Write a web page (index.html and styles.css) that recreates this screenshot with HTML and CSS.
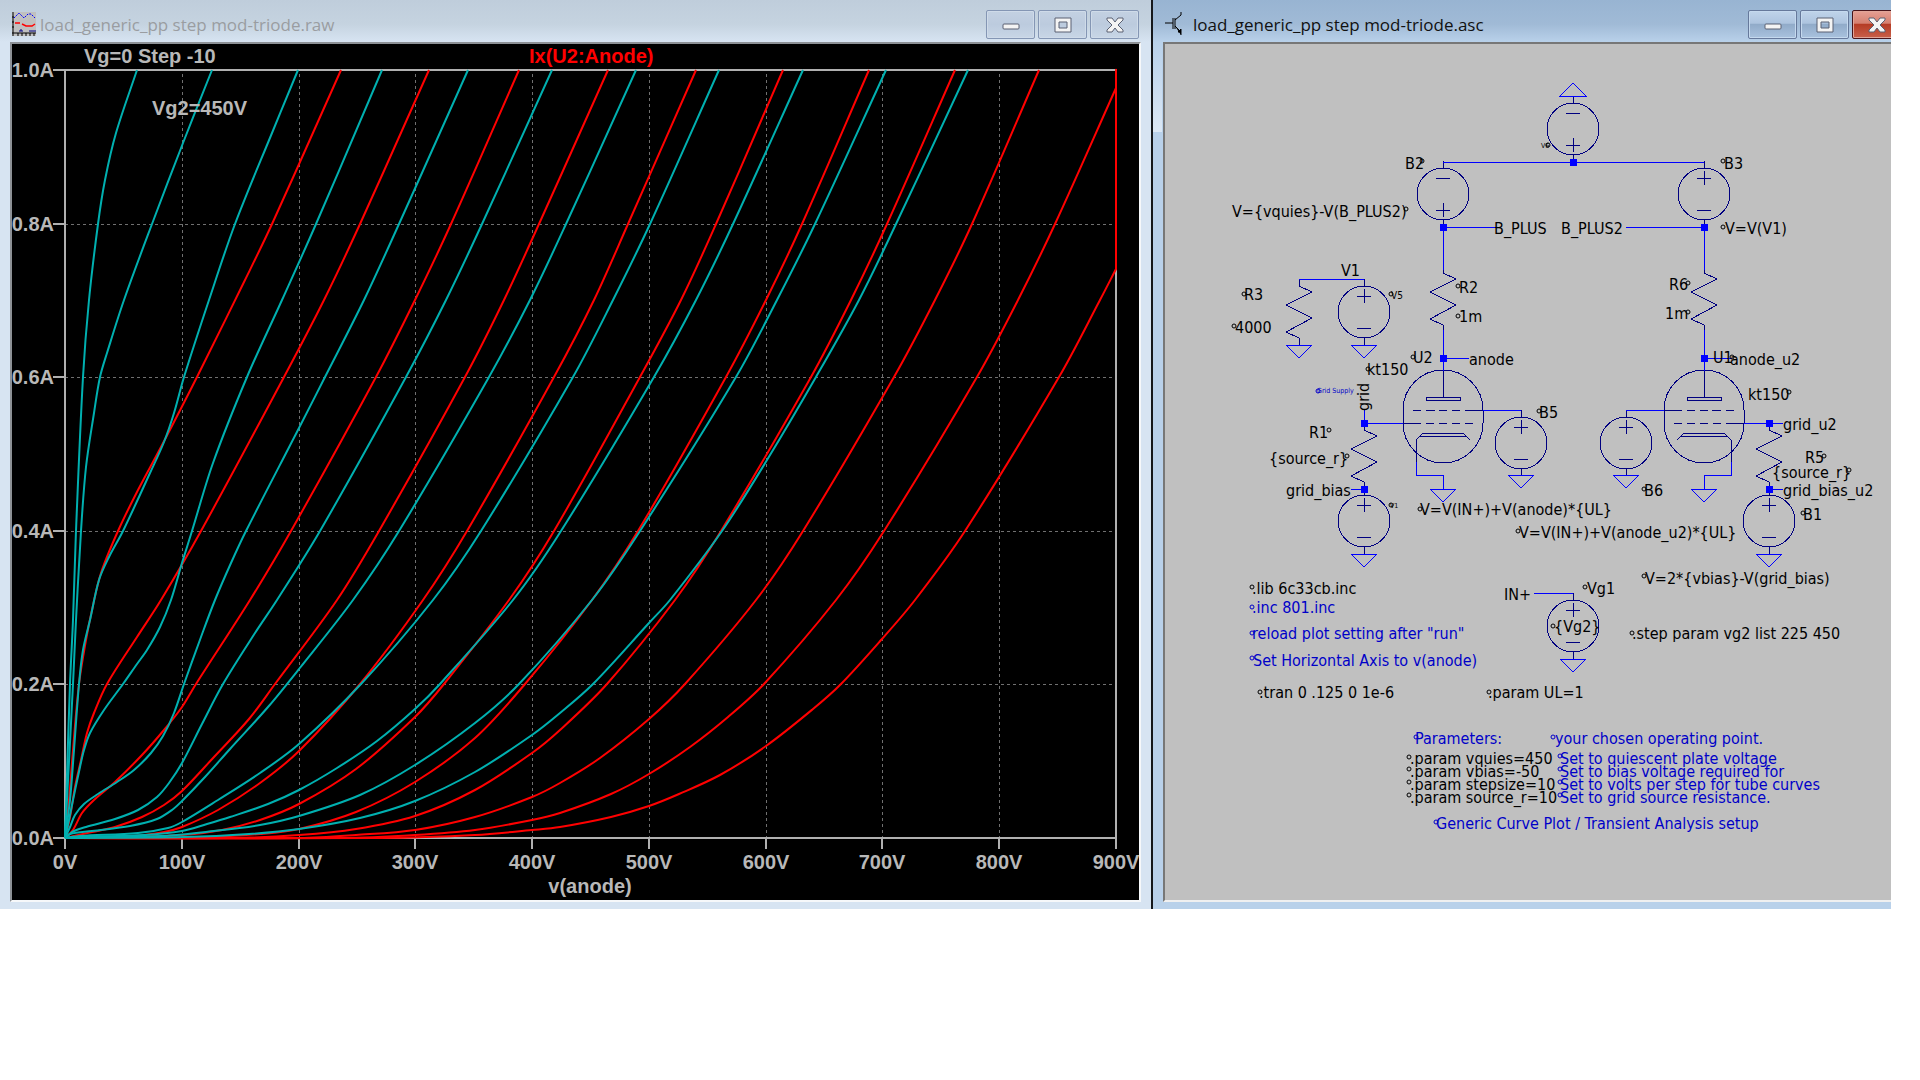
FILE: index.html
```html
<!DOCTYPE html>
<html lang="en">
<head>
<meta charset="utf-8">
<title>load_generic_pp step mod-triode</title>
<link rel="stylesheet" href="styles.css">
</head>
<body>
<main class="workspace">

<section class="window plot-window" aria-label="Waveform window">
  <header class="titlebar">
    <svg class="app-icon" viewBox="0 0 24 24" aria-hidden="true">
      <rect width="24" height="24" fill="#c0c0c0"/>
      <path d="M1 0V24M0 21H24M0 5H2M0 10H2M0 15H2M6 21V24M10 21V24M14 21V24M18 21V24M22 21V24" stroke="#000" fill="none"/>
      <path d="M2 6L7 1L12 6L16 2H19L23 6" stroke="#00f" stroke-dasharray="2 1" fill="none"/>
      <path d="M3 11H8M10 12L14 14H20L23 12" stroke="#f00" stroke-width="1.5" fill="none"/>
      <path d="M8 20V18H10V20M17 19H24" stroke="#000080" fill="none"/>
    </svg>
    <h1 class="title">load_generic_pp step mod-triode.raw</h1>
    <div class="controls">
      <button class="ctl" type="button" aria-label="Minimize"><svg viewBox="0 0 24 20"><rect x="4" y="9" width="16" height="5" rx="1"/></svg></button>
      <button class="ctl" type="button" aria-label="Maximize"><svg viewBox="0 0 24 20"><path fill-rule="evenodd" d="M4 3H20V17H4ZM8 7V13H16V7Z"/></svg></button>
      <button class="ctl" type="button" aria-label="Close"><svg viewBox="0 0 24 20"><path d="M4 3H9L12 7L15 3H20V5L15 10L20 15V17H15L12 13L9 17H4V15L9 10L4 5Z"/></svg></button>
    </div>
  </header>
  <div class="client plot-client">
    <svg class="canvas" viewBox="12 44 1127 856" role="img" aria-label="Plate curves">
      <g class="grid">
        <path d="M65 224H1116M65 377H1116M65 531H1116M65 684H1116"/>
        <path d="M182 74V838M299 74V838M415 74V838M532 74V838M649 74V838M766 74V838M882 74V838M999 74V838"/>
      </g>
      <path class="axis" d="M53 70H1116V849M53 224H65M53 377H65M53 531H65M53 684H65M53 838H1116M65 70V849M182 838V849M299 838V849M415 838V849M532 838V849M649 838V849M766 838V849M882 838V849M999 838V849"/>
      <g id="curves" class="curves"></g>
      <g class="label">
        <text x="84" y="63">Vg=0 Step -10</text>
        <text x="152" y="115">Vg2=450V</text>
        <text class="trace" x="529" y="63">Ix(U2:Anode)</text>
        <g class="end">
          <text x="54" y="77">1.0A</text><text x="54" y="231">0.8A</text><text x="54" y="384">0.6A</text><text x="54" y="538">0.4A</text><text x="54" y="691">0.2A</text><text x="54" y="845">0.0A</text>
        </g>
        <g class="mid">
          <text x="65" y="869">0V</text><text x="182" y="869">100V</text><text x="299" y="869">200V</text><text x="415" y="869">300V</text><text x="532" y="869">400V</text><text x="649" y="869">500V</text><text x="766" y="869">600V</text><text x="882" y="869">700V</text><text x="999" y="869">800V</text><text x="1116" y="869">900V</text>
          <text x="590" y="893">v(anode)</text>
        </g>
      </g>
    </svg>
  </div>
</section>

<section class="window schematic-window" aria-label="Schematic window">
  <header class="titlebar">
    <svg class="app-icon" viewBox="0 0 24 24" aria-hidden="true">
      <path d="M0 11H8M8 6V17M10 6V17M10 8L16 3V0" stroke="#000" fill="none"/>
      <path d="M10 14L16 20V23M16 20H13L16 17Z" stroke="#000" fill="#000"/>
    </svg>
    <h1 class="title">load_generic_pp step mod-triode.asc</h1>
    <div class="controls">
      <button class="ctl" type="button" aria-label="Minimize"><svg viewBox="0 0 24 20"><rect x="4" y="9" width="16" height="5" rx="1"/></svg></button>
      <button class="ctl" type="button" aria-label="Maximize"><svg viewBox="0 0 24 20"><path fill-rule="evenodd" d="M4 3H20V17H4ZM8 7V13H16V7Z"/></svg></button>
      <button class="ctl close" type="button" aria-label="Close"><svg viewBox="0 0 24 20"><path d="M4 3H9L12 7L15 3H20V5L15 10L20 15V17H15L12 13L9 17H4V15L9 10L4 5Z"/></svg></button>
    </div>
  </header>
  <div class="client schematic-client">
    <svg class="canvas" viewBox="1165 44 726 856" role="img" aria-label="Curve tracer schematic">
      <defs>
        <g id="source"><circle r="26"/><path d="M0-33V-26M0 26V33M-7-16H7M0-23V-9M-7 16H7"/></g>
        <path id="ground" d="M-13 0H13L0 13Z"/>
        <path id="resistor" d="M0 0V7L13 13L-13 26L13 39L-13 53L0 59V66"/>
        <g id="tube">
          <path d="M-40 52A40 40 0 0 1 40 52V65A40 40 0 0 1-40 65Z"/>
          <path d="M0 13V39M-17 39H17V42H-17ZM-30 52H-22M-17 52H-8M-4 52H4M9 52H17M22 52H40M-40 65H-22M-17 65H-9M-4 65H4M9 65H17M22 65H30"/>
          <path d="M27 82L20 75H-20L-27 82V104M-23 78H23"/>
        </g>
      </defs>
      <g class="symbols">
        <use href="#source" transform="translate(1573 129) rotate(180)"/>
        <use href="#source" transform="translate(1443 194) rotate(180)"/>
        <use href="#source" x="1704" y="194"/>
        <use href="#source" x="1364" y="312"/>
        <use href="#source" x="1521" y="443"/>
        <use href="#source" x="1626" y="443"/>
        <use href="#source" x="1364" y="521"/>
        <use href="#source" x="1769" y="521"/>
        <use href="#source" x="1573" y="626"/>
        <use href="#resistor" x="1299" y="279"/>
        <use href="#resistor" x="1443" y="266"/>
        <use href="#resistor" x="1704" y="266"/>
        <use href="#resistor" x="1364" y="423"/>
        <use href="#resistor" x="1769" y="423"/>
        <use href="#tube" x="1443" y="358"/>
        <use href="#tube" transform="translate(1704 358) scale(-1 1)"/>
      </g>
      <g class="wires">
        <use href="#ground" transform="translate(1573 96) rotate(180)"/>
        <use href="#ground" x="1299" y="345"/><use href="#ground" x="1364" y="345"/>
        <use href="#ground" x="1521" y="475"/><use href="#ground" x="1626" y="475"/>
        <use href="#ground" x="1443" y="489"/><use href="#ground" x="1704" y="489"/>
        <use href="#ground" x="1364" y="554"/><use href="#ground" x="1769" y="554"/>
        <use href="#ground" x="1573" y="659"/>
        <path d="M1443 162H1704M1443 227H1496M1626 227H1704M1443 227V270M1704 227V270M1299 279H1364M1443 330V371M1704 330V371M1443 358H1469M1704 358H1732M1364 410V423H1403M1351 489H1364M1483 410H1521M1626 410H1664M1744 423H1783M1769 489H1783M1534 593H1573M1416 462V475H1443V489M1731 462V475H1704V489"/>
        <path class="nodes" d="M1570 159h7v7h-7zM1440 224h7v7h-7zM1701 224h7v7h-7zM1440 355h7v7h-7zM1701 355h7v7h-7zM1361 420h7v7h-7zM1766 420h7v7h-7zM1361 486h7v7h-7zM1766 486h7v7h-7z"/>
      </g>
      <g class="anchors">
        <path class="a" d="M1422 161h0M1723 161h0M1406 209h0M1723 227h0M1548 145h0M1244 294h0M1391 294h0M1234 326h0M1458 286h0M1458 316h0M1413 357h0M1368 369h0M1329 430h0M1347 456h0M1391 505h0M1539 411h0M1420 509h0M1518 531h0M1644 576h0M1688 283h0M1688 312h0M1732 357h0M1789 392h0M1824 456h0M1849 470h0M1803 513h0M1644 489h0M1252 587h0M1260 692h0M1489 692h0M1585 587h0M1553 626h0M1632 633h0M1409 757h0M1409 769h0M1409 782h0M1409 795h0"/>
        <path class="a note" d="M1318 391h0M1252 607h0M1252 633h0M1252 658h0M1416 737h0M1553 737h0M1560 756h0M1560 769h0M1560 782h0M1560 795h0M1436 822h0"/>
      </g>
      <g class="text">
        <text x="1405" y="169">B2</text><text x="1724" y="169">B3</text>
        <text x="1232" y="217">V={vquies}-V(B_PLUS2)</text>
        <text x="1494" y="234">B_PLUS</text><text x="1561" y="234">B_PLUS2</text><text x="1725" y="234">V=V(V1)</text>
        <text class="tiny" x="1541" y="148">V6</text>
        <text x="1341" y="276">V1</text><text x="1244" y="300">R3</text><text class="small" x="1391" y="299">V5</text><text x="1235" y="333">4000</text>
        <text x="1459" y="293">R2</text><text x="1459" y="322">1m</text>
        <text x="1413" y="363">U2</text><text x="1469" y="365">anode</text><text x="1367" y="375">kt150</text>
        <text class="tiny note" x="1317" y="393">Grid Supply</text>
        <text transform="translate(1369 411) rotate(-90)">grid</text>
        <text x="1309" y="438">R1</text><text x="1269" y="464">{source_r}</text><text x="1286" y="496">grid_bias</text><text class="tiny" x="1390" y="508">V1</text>
        <text x="1539" y="418">B5</text>
        <text x="1420" y="515">V=V(IN+)+V(anode)*{UL}</text><text x="1519" y="538">V=V(IN+)+V(anode_u2)*{UL}</text><text x="1645" y="584">V=2*{vbias}-V(grid_bias)</text>
        <text x="1669" y="290">R6</text><text x="1665" y="319">1m</text><text x="1713" y="363">U1</text><text x="1730" y="365">anode_u2</text><text x="1748" y="400">kt150</text>
        <text x="1783" y="430">grid_u2</text><text x="1805" y="463">R5</text><text x="1772" y="478">{source_r}</text><text x="1783" y="496">grid_bias_u2</text>
        <text x="1803" y="520">B1</text><text x="1644" y="496">B6</text>
        <text x="1252" y="594">.lib 6c33cb.inc</text>
        <text class="note" x="1252" y="613">.inc 801.inc</text>
        <text class="note" x="1252" y="639">reload plot setting after "run"</text>
        <text class="note" x="1253" y="666">Set Horizontal Axis to v(anode)</text>
        <text x="1259" y="698">.tran 0 .125 0 1e-6</text><text x="1488" y="698">.param UL=1</text>
        <text x="1504" y="600">IN+</text><text x="1587" y="594">Vg1</text><text x="1554" y="632">{Vg2}</text>
        <text x="1632" y="639">.step param vg2 list 225 450</text>
        <text class="note" x="1415" y="744">Parameters:</text><text class="note" x="1555" y="744">your chosen operating point.</text>
        <text x="1410" y="764">.param vquies=450</text><text x="1410" y="777">.param vbias=-50</text><text x="1410" y="790">.param stepsize=10</text><text x="1410" y="803">.param source_r=10</text>
        <text class="note" x="1560" y="764">Set to quiescent plate voltage</text><text class="note" x="1560" y="777">Set to bias voltage required for</text><text class="note" x="1560" y="790">Set to volts per step for tube curves</text><text class="note" x="1560" y="803">Set to grid source resistance.</text>
        <text class="note" x="1436" y="829">Generic Curve Plot / Transient Analysis setup</text>
      </g>
    </svg>
  </div>
</section>

</main>
<script src="curves.js"></script>
</body>
</html>
```
FILE: styles.css
```css
* { box-sizing: border-box; }

body {
  margin: 0;
  background: #fff;
  font-family: "Open Sans", "Noto Sans", sans-serif;
}

.workspace {
  display: grid;
  grid-template-columns: minmax(0, 1153fr) minmax(0, 738fr);
  margin-right: 29px;
  overflow: hidden;
}

.window {
  display: flex;
  flex-direction: column;
  min-width: 0;
}

.plot-window {
  padding: 0 10px 7px 10px;
  border-right: 2px solid #15181c;
  background: linear-gradient(#bfcddb 0, #c5d3e0 24px, #d7e4f2 42px);
}

.schematic-window {
  padding: 0 0 7px 10px;
  background:
    linear-gradient(#b9d1ea, #dce8f5) 0 42px / 9px 90px no-repeat,
    linear-gradient(#98b4d2 0, #a0bad6 24px, #b9d1ea 42px);
}

.titlebar {
  display: flex;
  align-items: center;
  height: 42px;
}

.app-icon {
  flex: none;
  width: 24px;
  height: 24px;
  margin: 6px 4px 0 2px;
}

.title {
  flex: 1;
  margin: 8px 0 0 0;
  font-size: 17px;
  font-weight: 400;
  line-height: 24px;
  white-space: nowrap;
  color: #9a9da1;
}

.schematic-window .title { color: #111; }

.controls {
  display: flex;
  gap: 3px;
  padding: 7px 2px 0 0;
}

.schematic-window .controls { margin-right: -12px; }

.ctl {
  width: 49px;
  height: 29px;
  padding: 0;
  border: 1px solid #8496b4;
  border-radius: 2px;
  background: linear-gradient(#c3d1e2, #bccbde 50%, #c8d6e6);
  box-shadow: inset 0 0 0 1px #cfdbe9;
}

.ctl svg {
  display: block;
  width: 24px;
  height: 20px;
  margin: 0 auto;
  fill: #f4f4f4;
  stroke: #5a6072;
}

.schematic-window .ctl {
  border-color: #66799b;
  background: linear-gradient(#c0d4ea, #adc4df 45%, #91abc9 50%, #a9c2de);
  box-shadow: inset 0 0 0 1px #c5d9ee;
}

.schematic-window .close {
  border-color: #48141a;
  background: linear-gradient(#e5a094, #d58070 45%, #b53c25 50%, #c9604a);
  box-shadow: inset 0 0 0 1px #e0a598;
}

.client {
  border: 2px solid #8d9196;
  border-bottom-color: #f6f8fa;
}

.plot-client {
  border-right-color: #f6f8fa;
  background: #000;
}

.schematic-client {
  border-color: #777 transparent #f0f0f0 #777;
  border-right: 0;
  background: #c0c0c0;
}

.canvas {
  display: block;
  width: 100%;
  height: auto;
}

.grid path {
  fill: none;
  stroke: #707070;
  stroke-dasharray: 3 3;
  shape-rendering: crispEdges;
}

.axis {
  fill: none;
  stroke: #b0b0b0;
  stroke-width: 2;
  shape-rendering: crispEdges;
}

.curves {
  fill: none;
  stroke-width: 2;
}

.curves .red { stroke: #f00; }
.curves .cyan { stroke: #00b0b0; }

.label {
  font: 700 20px "Liberation Sans", sans-serif;
  fill: #b8b8b8;
}

.label .trace { fill: #f00; }
.label .end { text-anchor: end; }
.label .mid { text-anchor: middle; }

.symbols,
.wires {
  fill: none;
  stroke: #00f;
  shape-rendering: crispEdges;
}

.symbols { stroke: #000080; }

.wires .nodes {
  fill: #00f;
  stroke: none;
}

.anchors circle { fill: none; stroke: #000; }

.text {
  font: 400 16px "DejaVu Sans Condensed", "Open Sans", sans-serif;
  fill: #000;
}

.text .small { font-size: 10px; }
.text .tiny { font-size: 7px; }
.text .note { fill: #0000c8; }
.anchors .note { stroke: #0000c8; }
```
FILE: curves.js
```js
const SVG = "http://www.w3.org/2000/svg";

// Traces as canvas points, from the top of the plot down to the origin.
const traces = {
  red: [
    "341,70 272,224 245,280 197,377 161,447 138,490 118,531 101,573 92,610 86,640 79,684 73,750 69,800 65,838",
    "429,70 360,224 324,300 284,377 201,531 161,600 137,637 107,684 94,713 87,733 81,760 75,787 70,817 65,838",
    "519,70 451,224 415,300 376,377 291,531 250,600 196,684 182,707 164,730 142,755 115,782 94,800 82,813 73,830 65,838",
    "608,70 539,224 504,300 465,377 379,531 337,600 275,684 249,719 214,757 182,791 164,805 142,817 115,827 92,832 65,838",
    "696,70 628,224 594,300 554,377 467,531 423,600 360,684 299,751 260,783 218,810 182,827 164,832 134,836 65,838",
    "783,70 716,224 681,300 640,377 554,531 509,600 444,684 415,717 356,769 299,804 260,820 222,830 182,835 65,838",
    "869,70 802,224 766,300 726,377 638,531 592,600 525,684 475,738 415,782 356,812 299,829 260,834 207,837 65,838",
    "955,70 887,224 851,300 811,377 721,531 675,600 607,684 560,730 532,753 475,790 415,816 356,829 299,835 230,838 65,838",
    "1039,70 972,224 935,300 894,377 803,531 756,600 685,684 649,719 600,758 560,783 532,797 475,817 415,830 356,835 300,838 65,838",
    "1116,88 1055,224 1018,300 977,377 884,531 836,600 764,684 728,717 690,747 649,774 611,794 560,813 532,820 475,830 415,835 340,838 65,838",
    "1116,70 1116,70 1116,269 1116,269 1100,300 1059,377 965,531 915,600 882,639 841,684 813,709 766,746 720,775 679,794 649,806 611,817 560,827 532,830 475,835 380,838 65,838"
  ],
  cyan: [
    "137,70 116,133 105,180 98,224 89,300 83,377 76,531 73,620 70,684 65,838",
    "212,70 183,143 152,224 124,300 107,353 100,377 94,413 86,467 81,531 76,620 73,684 65,838",
    "298,70 272,133 235,224 209,300 184,377 174,413 164,442 150,473 123,531 109,557 99,580 90,620 83,650 79,684 74,750 70,800 65,838",
    "382,70 316,224 282,300 247,377 213,463 192,531 182,563 171,600 160,627 147,650 137,664 123,684 104,710 90,733 84,750 80,767 73,800 69,820 65,838",
    "468,70 399,224 364,300 325,377 299,428 246,531 231,563 215,600 201,637 184,684 174,713 163,736 151,753 134,770 117,782 98,794 84,804 75,815 70,827 65,838",
    "552,70 482,224 446,300 406,377 320,531 277,600 255,633 223,684 202,724 182,763 169,783 157,797 138,810 115,819 86,827 74,831 65,838",
    "636,70 566,224 530,300 489,377 399,531 353,600 299,669 268,707 230,749 205,777 182,801 172,810 157,819 130,826 92,831 70,834 65,838",
    "719,70 650,224 613,300 573,377 481,531 433,600 361,684 299,744 260,773 218,800 182,822 168,828 138,833 80,836 65,838",
    "803,70 733,224 696,300 654,377 561,531 513,600 440,684 415,709 377,741 337,768 299,790 268,804 230,817 207,824 182,831 145,835 80,837 65,838",
    "886,70 815,224 777,300 736,377 640,531 592,600 519,684 475,723 415,765 360,795 299,816 260,825 214,831 161,836 65,838",
    "968,70 896,224 859,300 816,377 767,460 722,531 670,600 649,623 593,684 560,713 532,735 475,772 415,801 360,818 299,829 249,834 184,837 65,838"
  ]
};

// Catmull-Rom spline through the points, written as cubic Bezier segments.
function spline(list) {
  const p = list.split(" ").map(s => s.split(",").map(Number));
  let d = `M${p[0]}`;
  for (let i = 0; i < p.length - 1; i++) {
    const a = p[i - 1] || p[i], b = p[i], c = p[i + 1], e = p[i + 2] || c;
    const chord = (m, n) => Math.hypot(n[0] - m[0], n[1] - m[1]) || 1;
    const len = chord(b, c);
    const k1 = len / (chord(a, b) + len), k2 = len / (len + chord(c, e));
    const ctl = (q, m, n, k) => [0, 1].map(j => q[j] + (n[j] - m[j]) * k / 3);
    d += `C${ctl(b, a, c, k1)} ${ctl(c, e, b, k2)} ${c}`;
  }
  return d;
}

const host = document.getElementById("curves");
for (const [name, lists] of Object.entries(traces)) {
  for (const list of lists) {
    const path = document.createElementNS(SVG, "path");
    path.setAttribute("class", name);
    path.setAttribute("d", spline(list));
    host.append(path);
  }
}

// A small open circle at every text anchor of the schematic.
for (const group of document.querySelectorAll(".anchors .a")) {
  for (const [, x, y] of group.getAttribute("d").matchAll(/M(\d+) (\d+)/g)) {
    const dot = document.createElementNS(SVG, "circle");
    dot.setAttribute("cx", x);
    dot.setAttribute("cy", y);
    dot.setAttribute("r", 2);
    dot.setAttribute("class", group.classList.contains("note") ? "note" : "");
    group.parentNode.append(dot);
  }
}
```
